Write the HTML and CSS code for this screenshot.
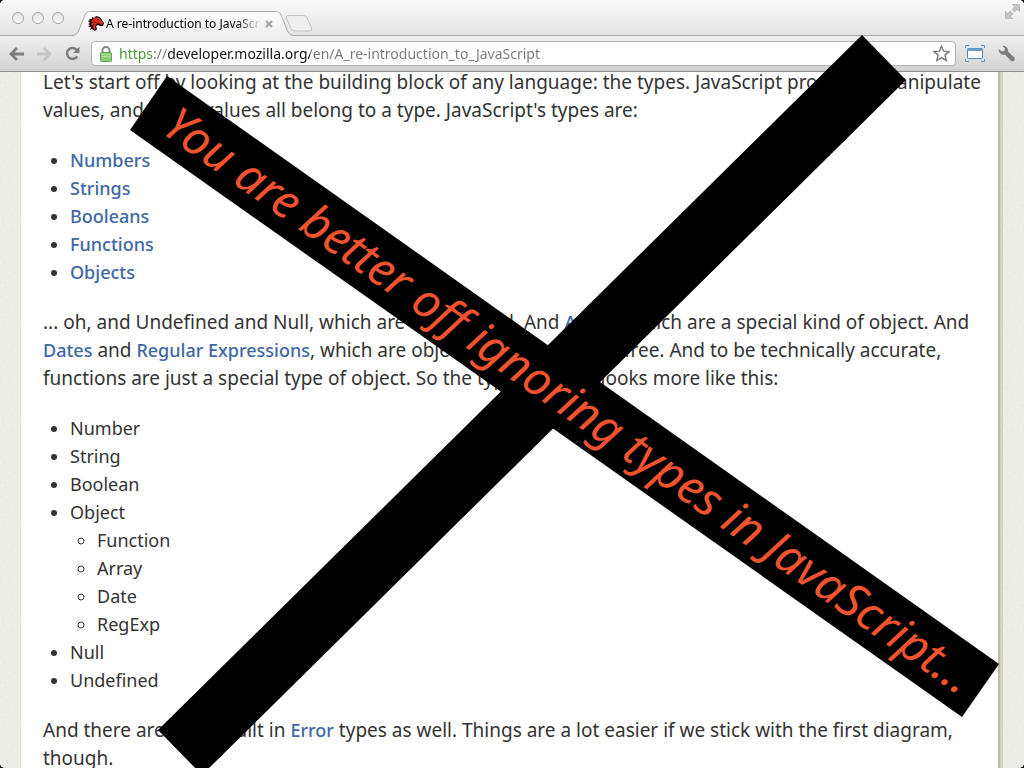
FILE: index.html
```html
<!DOCTYPE html>
<html lang="en">
<head>
<meta charset="utf-8">
<title>A re-introduction to JavaScript</title>
<link rel="stylesheet" href="styles.css">
</head>
<body>
<div class="window">
  <header class="chrome">
    <div class="tabstrip">
      <div class="lights">
        <button class="light" aria-label="Close"></button>
        <button class="light" aria-label="Minimize"></button>
        <button class="light" aria-label="Zoom"></button>
      </div>
      <div class="tab">
        <svg class="tab-shape" width="222" height="25" viewBox="0 0 222 25" aria-hidden="true">
          <defs><linearGradient id="tabfill" x1="0" y1="0" x2="0" y2="1"><stop offset="0" stop-color="#fbfbfb"/><stop offset="1" stop-color="#efefef"/></linearGradient></defs>
          <path d="M0 24.5C4 24 5 23 6.500 20L12.500 5C14 1.500 15 .5 19 .5H203C207 .5 208 1.500 209.500 5L215.500 20C217 23 218 24 222 24.500V25H0Z" fill="url(#tabfill)"/>
          <path d="M0 24.5C4 24 5 23 6.500 20L12.500 5C14 1.500 15 .5 19 .5H203C207 .5 208 1.500 209.500 5L215.500 20C217 23 218 24 222 24.500" fill="none" stroke="#a9a9a9"/>
        </svg>
        <svg class="favicon" width="16" height="16" viewBox="0 0 16 16" aria-hidden="true">
          <path d="M0 5L2 4 1 3 4 3 4 1 6 2 8 0 12 1 14 4 16 7 15 10 12 10 10 9 8 10 9 13 7 15 4 13 2 14 3 11 0 11 2 9 0 8 2 7Z" fill="#190806"/>
          <path d="M5 3L8 1 11 2 13 4 15 7 14 9 12 8 10 7 8 8 7 11 8 13 6 14 5 11 6 8 4 10 3 8 5 6 3 6Z" fill="#d42c17"/>
          <path d="M9 3h2v1H9zM6 5l2 1-1 1zM12 7l2 1" fill="#230705"/>
        </svg>
        <span class="tab-title">A re-introduction to JavaScript</span>
        <button class="tab-close" aria-label="Close tab"><svg width="8" height="8" viewBox="0 0 8 8"><path d="M1 1L7 7M7 1L1 7" stroke="#a0a0a0" stroke-width="2"/></svg></button>
      </div>
      <button class="newtab" aria-label="New tab"><svg width="28" height="17" viewBox="0 0 28 17"><path d="M4 .5H18.500Q21 .5 22 3L26.500 13Q27.500 16 25 16H10Q7 16 6 13.500L1.500 3.500Q.5 .5 4 .5Z" fill="#eee" stroke="#c4c4c4"/></svg></button>
      <button class="expand" aria-label="Full screen"><svg width="15" height="15" viewBox="0 0 15 15"><path d="M7.500 .5H14.500V7.500L12.300 5.300 9.700 7.900 7.100 5.300 9.700 2.700ZM.5 7.500L2.700 9.700 5.300 7.100 7.900 9.700 5.300 12.300 7.500 14.500H.5Z" fill="#c4c4c4" stroke="#a4a4a4" stroke-width=".6"/></svg></button>
    </div>
    <div class="toolbar">
      <button class="tool" aria-label="Back"><svg width="15" height="14" viewBox="0 0 15 14"><path d="M8 1L2 7 8 13M2.500 7H15" fill="none" stroke="#7d7d7d" stroke-width="2.800"/></svg></button>
      <button class="tool" aria-label="Forward"><svg width="15" height="14" viewBox="0 0 15 14"><path d="M7 1L13 7 7 13M12.500 7H0" fill="none" stroke="#c6c6c6" stroke-width="2.800"/></svg></button>
      <button class="tool" aria-label="Reload"><svg width="15" height="15" viewBox="0 0 15 15"><path d="M12.200 10.300A5.500 5.500 0 1 1 11.800 4" fill="none" stroke="#7d7d7d" stroke-width="2.500"/><path d="M14.500 .5V7H8Z" fill="#7d7d7d"/></svg></button>
      <div class="address">
        <svg width="12" height="16" viewBox="0 0 12 16" aria-hidden="true"><path d="M2.500 8V4.500a3.500 3.500 0 0 1 7 0V8" fill="none" stroke="#888" stroke-width="2"/><rect x=".5" y="6.500" width="11" height="9" rx="1" fill="#8ccb76" stroke="#5da14c"/><path d="M1.500 8.500h9M1.500 10.500h9" stroke="#b4e2a3"/></svg>
        <input class="url" type="text" aria-label="Address" value="https://developer.mozilla.org/en/A_re-introduction_to_JavaScript">
        <button class="star" aria-label="Bookmark"><svg width="17" height="17" viewBox="0 0 17 17"><path d="M8.500 1.200L10.600 6.200 16 6.600 11.900 10.100 13.200 15.500 8.500 12.600 3.800 15.500 5.100 10.100 1 6.600 6.400 6.200Z" fill="#fff" stroke="#777" stroke-width="1.400"/></svg></button>
      </div>
      <button class="tool" aria-label="Window size"><svg width="20" height="17" viewBox="0 0 20 17"><rect x="2.500" y="3.500" width="15" height="10" rx="1" fill="#f7f9fb" stroke="#5288b8"/><path d="M2 3.500H18V6H2Z" fill="#6a9dca"/><path d="M.5 3V.5H4M16 .5h3.500V3M.5 14v2.500H4M16 16.500h3.500V14" fill="none" stroke="#5f93bf"/></svg></button>
      <button class="tool" aria-label="Settings"><svg width="17" height="17" viewBox="0 0 17 17"><path d="M4.200 .8A5 5 0 0 1 10 6.500L16 12.200A2.300 2.300 0 0 1 12.600 15.600L7 9.600A5 5 0 0 1 .7 4L3.700 6.600 6.300 6 6.900 3.600Z" fill="#7b7b7b"/></svg></button>
    </div>
  </header>
  <main class="viewport">
    <article class="page">
      <p>Let's start off by looking at the building block of any language: the types. JavaScript programs manipulate<br>values, and those values all belong to a type. JavaScript's types are:</p>
      <ul>
        <li><a href="#">Numbers</a></li>
        <li><a href="#">Strings</a></li>
        <li><a href="#">Booleans</a></li>
        <li><a href="#">Functions</a></li>
        <li><a href="#">Objects</a></li>
      </ul>
      <p>... oh, and Undefined and Null, which are slightly odd. And <a href="#">Arrays</a>, which are a special kind of object. And<br><a href="#">Dates</a> and <a href="#">Regular Expressions</a>, which are objects that you get for free. And to be technically accurate,<br>functions are just a special type of object. So the type diagram looks more like this:</p>
      <ul>
        <li>Number</li>
        <li>String</li>
        <li>Boolean</li>
        <li>Object
          <ul>
            <li>Function</li>
            <li>Array</li>
            <li>Date</li>
            <li>RegExp</li>
          </ul>
        </li>
        <li>Null</li>
        <li>Undefined</li>
      </ul>
      <p>And there are some built in <a href="#">Error</a> types as well. Things are a lot easier if we stick with the first diagram,<br>though.</p>
    </article>
  </main>
  <svg class="cross" viewBox="0 0 1024 768">
    <path d="M862 35L906 80 202 775 158 730Z"/>
    <path d="M167 76L999 664 962 717 130 130Z"/>
    <text class="slogan" transform="translate(160 132) rotate(35.200)">You are better off ignoring types in JavaScript...</text>
  </svg>
</div>
</body>
</html>
```
FILE: styles.css
```css
* { box-sizing: border-box; }
body {
  margin: 0;
  background: #000;
  font-family: "Noto Sans", "Open Sans", sans-serif;
}
button {
  display: flex;
  padding: 0;
  border: 0;
  background: none;
}
.window {
  position: relative;
  display: flex;
  flex-direction: column;
  height: 100vh;
  overflow: hidden;
  border-radius: 5px;
  background: #efefea;
}
.chrome {
  position: relative;
  z-index: 1;
  flex: none;
}
.tabstrip {
  display: flex;
  align-items: flex-end;
  height: 36px;
  background: linear-gradient(#fafafa, #e2e2e2);
  box-shadow: inset 0 -1px #a9a9a9;
}
.lights {
  display: flex;
  align-self: center;
  gap: 8px;
  width: 72px;
  padding: 0 0 0 12px;
}
.light {
  width: 12px;
  height: 12px;
  border: 1px solid #a5a5a5;
  border-radius: 50%;
  background: linear-gradient(#e2e2e2, #fafafa);
}
.tab {
  position: relative;
  display: flex;
  align-items: center;
  width: 222px;
  height: 25px;
  padding-left: 16px;
}
.tab-shape {
  position: absolute;
  inset: 0;
}
.favicon, .tab-title, .tab-close { position: relative; }
.tab-title {
  width: 155px;
  margin-left: 2px;
  overflow: hidden;
  white-space: nowrap;
  font-size: 12px;
  mask-image: linear-gradient(to right, #000 130px, transparent 155px);
}
.tab-close { margin-left: 4px; }
.newtab { margin: 0 auto 4px -9px; }
.expand {
  align-self: flex-start;
  margin: 4px 4px 0 0;
}
.toolbar {
  display: flex;
  align-items: center;
  gap: 13px;
  height: 36px;
  padding: 0 9px;
  border-bottom: 1px solid #8c8c8c;
  background: linear-gradient(#efefef, #d2d2d2);
}
.address {
  display: flex;
  flex: 1;
  align-items: center;
  gap: 7px;
  height: 25px;
  margin: 0 -4px 0 -2px;
  padding: 0 5px 0 8px;
  border: 1px solid #b4b4b4;
  border-radius: 4px;
  background: #fff;
}
.url {
  flex: 1;
  min-width: 0;
  padding: 0;
  border: 0;
  outline: 0;
  font: 14px "Noto Sans", sans-serif;
  color: transparent;
  background: linear-gradient(to right, #43962b 34px, #777 34px 48px, #111 48px 191px, #777 191px);
  background-clip: text;
}
.viewport {
  flex: 1;
  min-height: 0;
  overflow: hidden;
  padding: 0 24px 0 21px;
  background: #efefea url("data:image/svg+xml,%3Csvg xmlns='http://www.w3.org/2000/svg' width='100' height='100'%3E%3Cfilter id='n'%3E%3CfeTurbulence type='fractalNoise' baseFrequency='.4' numOctaves='2' stitchTiles='stitch'/%3E%3CfeColorMatrix values='0 0 0 0 .5 0 0 0 0 .5 0 0 0 0 .4 .18 0 0 0 -.05'/%3E%3C/filter%3E%3Crect width='100' height='100' filter='url(%23n)'/%3E%3C/svg%3E");
}
.page {
  margin-top: -4px;
  min-height: 100%;
  padding-left: 22px;
  border-right: 2px solid #c0bba0;
  box-shadow: 3px 0 #d7d3c3, -1px 0 #e5e5dc;
  background: #fff;
  color: #333;
  font-size: 18px;
  line-height: 28px;
  white-space: nowrap;
}
.page p {
  margin: 0 0 22px;
  font-size: 19px;
}
.page ul {
  margin: 0 0 22px;
  padding-left: 27px;
}
.page ul ul { margin: 0; }
.page a {
  color: #4067a5;
  font-size: 18px;
  font-weight: 500;
  text-decoration: none;
}
.cross {
  position: absolute;
  z-index: 2;
  inset: 0;
  width: 100%;
  height: 100%;
  pointer-events: none;
}
.slogan {
  fill: #f0532d;
  font: italic 47px "Noto Sans", cursive;
}
```
